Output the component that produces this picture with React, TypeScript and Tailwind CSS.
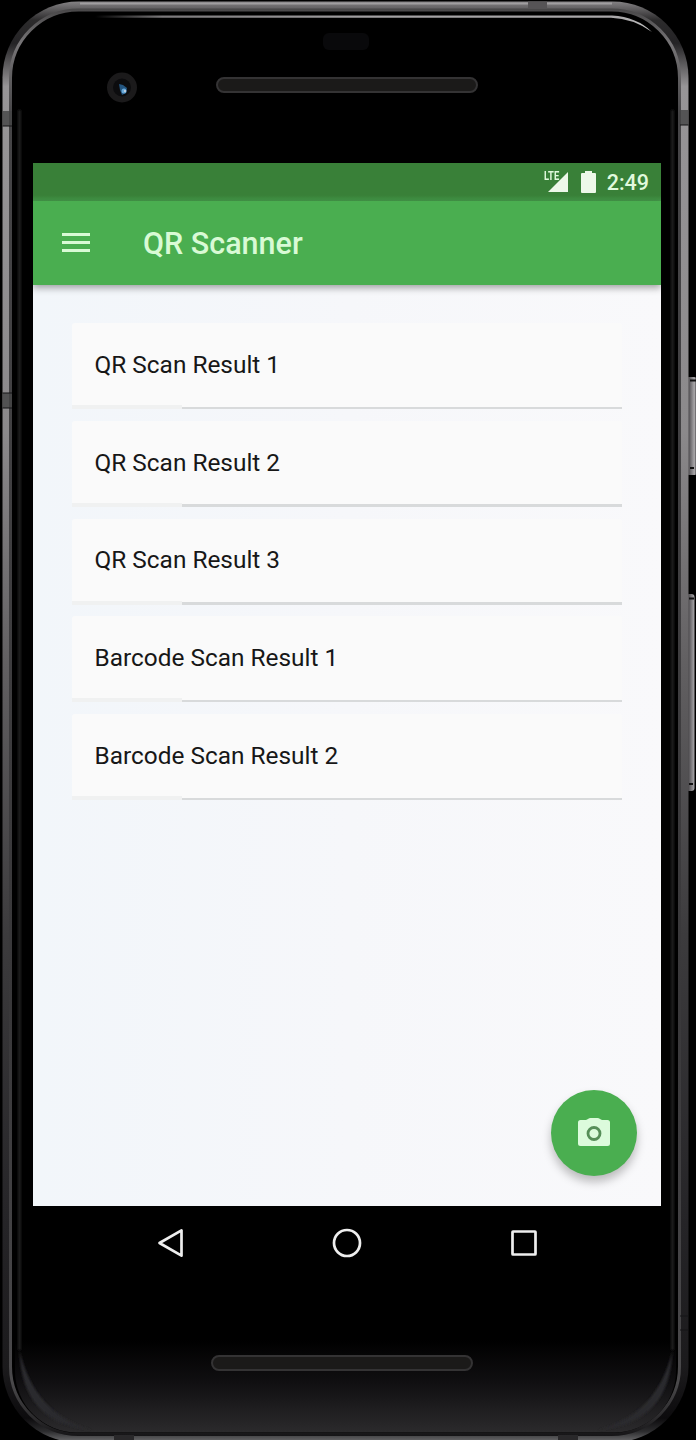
const results = [
  "QR Scan Result 1",
  "QR Scan Result 2",
  "QR Scan Result 3",
  "Barcode Scan Result 1",
  "Barcode Scan Result 2",
];

function PhoneBody() {
  return (
    <svg className="absolute inset-0" width="696" height="1440" viewBox="0 0 696 1440" fill="none" aria-hidden="true">
      <defs>
        <linearGradient id="edge" x1="0" y1="0" x2="0" y2="1440" gradientUnits="userSpaceOnUse">
          <stop offset="0" stopColor="#8c8a8c" />
          <stop offset="0.005" stopColor="#686668" />
          <stop offset="0.014" stopColor="#2c2b2c" />
          <stop offset="0.03" stopColor="#242325" />
          <stop offset="0.06" stopColor="#979597" />
          <stop offset="0.3" stopColor="#8b898b" />
          <stop offset="0.46" stopColor="#626062" />
          <stop offset="0.65" stopColor="#3c3b3d" />
          <stop offset="0.85" stopColor="#252427" />
          <stop offset="0.95" stopColor="#1b1a1c" />
          <stop offset="0.985" stopColor="#0c0b0d" />
          <stop offset="0.994" stopColor="#2c2c2e" />
          <stop offset="1" stopColor="#606062" />
        </linearGradient>
        <linearGradient id="inner" x1="0" y1="0" x2="0" y2="1440" gradientUnits="userSpaceOnUse">
          <stop offset="0" stopColor="#3c3b3c" />
          <stop offset="0.03" stopColor="#777577" />
          <stop offset="0.08" stopColor="#464547" />
          <stop offset="0.7" stopColor="#39383a" />
          <stop offset="0.96" stopColor="#4a494b" />
          <stop offset="0.985" stopColor="#2b2a2c" />
          <stop offset="1" stopColor="#111012" />
        </linearGradient>
        <linearGradient id="glass" x1="0" y1="1340" x2="0" y2="1434" gradientUnits="userSpaceOnUse">
          <stop offset="0" stopColor="#000000" />
          <stop offset="0.45" stopColor="#100f11" />
          <stop offset="1" stopColor="#2c2b2d" />
        </linearGradient>
        <linearGradient id="shine" x1="95" y1="0" x2="655" y2="0" gradientUnits="userSpaceOnUse">
          <stop offset="0" stopColor="#000000" />
          <stop offset="0.12" stopColor="#7b797b" />
          <stop offset="0.5" stopColor="#a3a1a3" />
          <stop offset="0.94" stopColor="#aaa8aa" />
          <stop offset="1" stopColor="#c5c5c5" />
        </linearGradient>
        <linearGradient id="button" x1="688" y1="0" x2="696" y2="0" gradientUnits="userSpaceOnUse">
          <stop offset="0" stopColor="#454346" />
          <stop offset="0.5" stopColor="#858386" />
          <stop offset="0.8" stopColor="#aaa8aa" />
          <stop offset="1" stopColor="#5b595c" />
        </linearGradient>
        <filter id="soft" x="-10" y="-10" width="716" height="1460" filterUnits="userSpaceOnUse">
          <feGaussianBlur stdDeviation="1" />
        </filter>
      </defs>
      <rect x="686" y="377" width="11" height="98" rx="3" fill="url(#button)" />
      <path d="M690 380.500h6M690 468h4" stroke="#111" strokeWidth="2" />
      <rect x="686" y="594" width="8.500" height="197" rx="3" fill="url(#button)" />
      <path d="M689 598.500h5M689 784h4" stroke="#111" strokeWidth="2" />
      <rect x="2.500" y="1.500" width="686" height="1441" rx="76" fill="url(#edge)" />
      <path d="M80 3.500H612" stroke="#a09ea0" strokeWidth="2" />
      <rect x="10.500" y="10" width="669" height="1424.500" rx="68" fill="#000" stroke="url(#inner)" strokeWidth="3" />
      <rect x="15" y="14" width="661" height="1418.500" rx="62" fill="url(#glass)" />
      <path d="M19.500 110V1350M672.500 110V1350" stroke="#1b1a1d" strokeWidth="4" filter="url(#soft)" />
      <path d="M19.500 1350Q21 1424 92 1430Q34 1414 19.500 1350M672.500 1350Q670 1424 598 1430Q658 1414 672.500 1350" fill="#2c2b2e" filter="url(#soft)" />
      <path d="M95 15.500H612Q637 17 652 32Q633 18.500 611 17.800H95Z" fill="url(#shine)" />
      <path d="M2.500 111H12v15H2.500zM679.500 110h9v15h-9zM2.500 393H12v15H2.500z" fill="#444345" fillOpacity="0.8" />
      <path d="M2.500 126H12M680 125h8.500M2.500 393H12M2.500 408H12M680 1316h8.500M680 1330h8.500" stroke="#151416" strokeWidth="1" />
      <path d="M528 1.500h19v7h-19z" fill="#565456" />
      <path d="M114 1435h20v5h-20zM558 1435h20v5h-20z" fill="#29282a" />
      <rect x="323" y="33" width="46" height="17" rx="6" fill="#09090b" />
      <circle cx="122" cy="87.500" r="15" fill="#1b1a1b" />
      <circle cx="122" cy="87.500" r="9" fill="#0c0c0e" />
      <path d="M119 84l4 1 4 3-1 5-4 2-2-5z" fill="#235580" />
      <circle cx="124" cy="91" r="2.500" fill="#69a9d8" />
      <circle cx="125" cy="91" r="1" fill="#d6d8e4" />
    </svg>
  );
}

function Speaker() {
  return <div className="h-4 w-[262px] rounded-full border-2 border-[#343334] bg-[#1b1a19]" />;
}

export default function App() {
  return (
    <div className="relative h-[1440px] w-[696px] overflow-hidden bg-black font-['Roboto',sans-serif]">
      <PhoneBody />
      <div className="relative flex h-full flex-col">
        <div className="flex h-[163px] shrink-0 justify-center pt-[77px] pr-[3px]">
          <Speaker />
        </div>

        <main className="relative ml-[33px] flex h-[1043px] w-[628px] shrink-0 flex-col overflow-hidden bg-[#f7f8fa]">
          <div className="flex h-[38px] shrink-0 items-center justify-end bg-linear-to-b from-[#398038] from-85% to-[#44994a] pr-3 text-[#e1f9dd]">
            <span className="mb-[12px] origin-right scale-x-75 text-[12.500px] leading-none font-bold">LTE</span>
            <svg className="-ml-[11px]" width="20" height="20" viewBox="0 0 20 20" fill="#edf8e9" aria-hidden="true">
              <path d="M20 0v20H0z" />
            </svg>
            <svg className="ml-[13px]" width="15" height="22" viewBox="0 0 15 22" fill="#edf8e9" aria-hidden="true">
              <path d="M4 0h7v2h3q1 0 1 1v18q0 1-1 1H1q-1 0-1-1V3q0-1 1-1h3z" />
            </svg>
            <span className="ml-[11px] pt-[2px] text-[21.500px] leading-none font-medium">2:49</span>
          </div>

          <header className="z-10 flex h-[84px] shrink-0 items-center bg-[#4aae50] pl-[29px] text-[#d9fad5] shadow-[0_3px_7px_rgba(0,0,0,0.35)]">
            <button aria-label="Menu" className="mb-px flex w-7 flex-col gap-[5px]">
              <span className="h-[3px] w-full bg-current" />
              <span className="h-[3px] w-full bg-current" />
              <span className="h-[3px] w-full bg-current" />
            </button>
            <h1 className="ml-[53px] pt-[2px] text-[30.500px] leading-none font-medium">QR Scanner</h1>
          </header>

          <ul className="flex flex-1 flex-col gap-[11.750px] bg-linear-to-r from-[#f2f6fa] via-[#f6f7fa] to-[#f9f9fb] px-[39px] pt-[38px]">
            {results.map((result) => (
              <li key={result} className="relative flex h-[86px] shrink-0 items-center rounded-[3px] bg-[#fafafa] pb-[2px] pl-[22.500px] text-[24.400px] leading-none text-[#171717]">
                {result}
                <span className="absolute right-0 bottom-0 left-0 flex items-end">
                  <span className="h-1 w-[110px] bg-[#f0f1f1]" />
                  <span className="h-[2.500px] flex-1 bg-[#d8dadb]" />
                </span>
              </li>
            ))}
          </ul>

          <button aria-label="Scan" className="absolute right-6 bottom-[30px] flex size-[86px] items-center justify-center rounded-full bg-[#4aae50] shadow-[0_6px_10px_rgba(0,0,0,0.25)]">
            <svg className="mb-[2px]" width="32" height="28" viewBox="0 0 32 28" aria-hidden="true">
              <path d="M10 1Q11 0 12.500 0h7Q21 0 22 1l2 1h5.500Q32 2 32 4.500v21q0 2.500-2.500 2.500h-27Q0 28 0 25.500v-21Q0 2 2.500 2H8z" fill="#dcfbdc" />
              <circle cx="16" cy="15.500" r="6" fill="none" stroke="#568e58" strokeWidth="2.800" />
            </svg>
          </button>
        </main>

        <nav className="flex h-[74px] shrink-0 items-center text-[#eeeeee]">
          <svg className="ml-[157px]" width="28" height="32" viewBox="0 0 28 32" fill="none" stroke="currentColor" strokeWidth="2.700" strokeLinejoin="round" aria-label="Back">
            <path d="M2.500 16L24.500 3.300v25.400z" />
          </svg>
          <svg className="ml-[146px]" width="32" height="32" viewBox="0 0 32 32" fill="none" stroke="currentColor" strokeWidth="2.700" aria-label="Home">
            <circle cx="16" cy="16" r="13" />
          </svg>
          <svg className="ml-[145px]" width="32" height="32" viewBox="0 0 32 32" fill="none" stroke="currentColor" strokeWidth="2.700" strokeLinejoin="round" aria-label="Recent apps">
            <rect x="4.500" y="4.500" width="23" height="23" rx="0.500" />
          </svg>
        </nav>

        <div className="flex flex-1 justify-center pt-[75px] pr-[12px]">
          <Speaker />
        </div>
      </div>
    </div>
  );
}
